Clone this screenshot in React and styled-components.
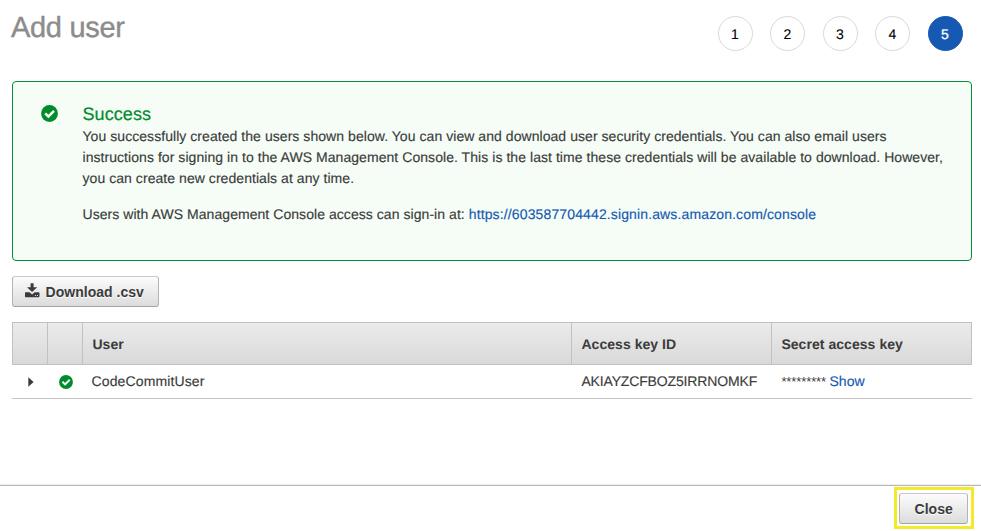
import React from "react";
import styled, { createGlobalStyle } from "styled-components";

const GlobalStyle = createGlobalStyle`
  * { box-sizing: border-box; }
  body {
    margin: 0;
    background: #fff;
    color: #3b3b3b;
    font-family: "Liberation Sans", Arial, sans-serif;
    font-size: 14px;
    line-height: 21px;
    text-rendering: geometricPrecision;
    overflow: hidden;
  }
`;

const Page = styled.div`
  display: flex;
  flex-direction: column;
  width: 981px;
  height: 531px;
  overflow: hidden;
`;

const Content = styled.main`
  flex: 1;
  display: flex;
  flex-direction: column;
  align-items: flex-start;
  padding: 0 9px 0 12px;
`;

const Header = styled.header`
  display: flex;
  justify-content: space-between;
  align-self: stretch;
  height: 81px;
  padding-right: 9.1px;
`;

const Title = styled.h1`
  margin: 10px 0 0 -1px;
  font-size: 29px;
  line-height: 36px;
  font-weight: 400;
  letter-spacing: -0.3px;
  color: #8c8c8c;
  -webkit-text-stroke: 0.4px #8c8c8c;
`;

const Steps = styled.ol`
  display: flex;
  gap: 17.5px;
  margin: 16px 0 0;
  padding: 0;
  list-style: none;
`;

const Step = styled.li`
  display: flex;
  align-items: center;
  justify-content: center;
  width: 35px;
  height: 35px;
  padding: 1px 1px 0 0;
  border-radius: 50%;
  border: 1px solid ${(p) => (p.$active ? "#1659b3" : "#d9d9d9")};
  background: ${(p) => (p.$active ? "#1659b3" : "#fff")};
  color: ${(p) => (p.$active ? "#fff" : "#000")};
  -webkit-text-stroke: ${(p) => (p.$active ? "0.3px" : "0.1px")} currentColor;
`;

const Alert = styled.section`
  display: flex;
  align-self: stretch;
  height: 180px;
  padding: 21px 20px 0 27px;
  border: 1px solid #048f3a;
  border-radius: 4px;
  background: #f5fdf6;
`;

const AlertIcon = styled.div`
  width: 42.5px;
  padding: 2px 0 0 0.5px;
`;

const AlertTitle = styled.h2`
  margin: 0;
  font-size: 18px;
  line-height: 23px;
  font-weight: 400;
  letter-spacing: 0.08px;
  color: #008c2c;
  -webkit-text-stroke: 0.2px #008c2c;
`;

const Paragraph = styled.p`
  margin: 0 0 15px;
  letter-spacing: 0.055px;
  -webkit-text-stroke: 0.15px currentColor;
  white-space: nowrap;
`;

const Link = styled.a`
  color: #1659b3;
  text-decoration: none;
`;

const ConsoleLink = styled(Link)`
  letter-spacing: 0.13px;
`;

const Button = styled.button`
  display: flex;
  align-items: center;
  gap: 5.5px;
  height: 31px;
  padding: ${(p) => p.$pad};
  border: 1px solid #b3b3b3;
  border-top-color: #c9c9c9;
  border-bottom-color: #a3a3a3;
  border-radius: 3px;
  background: linear-gradient(#fcfcfc, #dcdcdc);
  color: #3b3b3b;
  font: bold 14px/21px "Liberation Sans", Arial, sans-serif;
  letter-spacing: 0.03px;
  text-shadow: 0 1px 0 #fff;
`;

const Toolbar = styled.div`
  display: flex;
  padding: 15px 0;
`;

const Table = styled.div`
  width: 960px;
`;

const Row = styled.div`
  display: grid;
  grid-template-columns: 36px 35px 489px 200px 200px;
  height: 34px;
  border-bottom: 1px solid #c4c4c4;
`;

const HeadRow = styled(Row)`
  height: 43px;
  border: 1px solid #c1c1c1;
  grid-template-columns: 35px 35px 489px 200px 1fr;
  background: linear-gradient(#ebebeb, #d9d9d9);
`;

const HeadCell = styled.div`
  display: flex;
  align-items: center;
  padding: 2px 0 0 9.4px;
  border-right: 1px solid #c1c1c1;
  font-weight: 700;
  letter-spacing: 0.05px;
  &:last-child { border-right: 0; }
`;

const Cell = styled.div`
  display: flex;
  align-items: center;
  gap: 3.5px;
  padding-left: ${(p) => p.$inset};
  letter-spacing: ${(p) => p.$tracking || "0"};
  -webkit-text-stroke: 0.15px currentColor;
`;

const Secret = styled.span`
  font-size: 13px;
  letter-spacing: -0.1px;
  -webkit-text-stroke: 0;
`;

const Footer = styled.footer`
  display: flex;
  justify-content: flex-end;
  height: 46px;
  padding: 1px 7px 0 0;
  border-top: 1px solid #b8b8b8;
  box-shadow: 0 -1px 0 #ededed;
`;

const Highlight = styled.div`
  width: 80px;
  height: 42px;
  padding: 3px 2px 2px;
  border: 3px solid #f4e92a;
`;

const Icon = styled.svg`
  display: block;
  flex: none;
`;

const ButtonLabel = styled.span`
  padding-top: 1px;
`;

const CheckCircle = ({ size, ground }) => (
  <Icon width={size} height={size} viewBox="0 0 17 17">
    <circle cx="8.5" cy="8.5" r="8.4" fill="#008c2c" />
    <path d="M4.2 8.3 7.4 11.4 13 5.8" fill="none" stroke={ground} strokeWidth="2.5" />
  </Icon>
);

const DownloadIcon = () => (
  <Icon width="15" height="17" viewBox="0 0 15 17">
    <path d="M5.6 0.3h3v4h3.6L7.1 9 2 4.3h3.6z" fill="#3b3b3b" />
    <path
      fillRule="evenodd"
      d="M0.4 9.3h4.1l2.6 2.1 2.6-2.1h4.1l.7.7v3.5l-.7.7H.4l-.5-.7V10zM9.9 12v1h1v-1zM12 12v1h1v-1z"
      fill="#3b3b3b"
    />
  </Icon>
);

const Caret = () => (
  <Icon width="6" height="10" viewBox="0 0 6 10">
    <path d="M0.3 0.3 5.6 5 0.3 9.7z" fill="#3b3b3b" />
  </Icon>
);

export default function App() {
  return (
    <Page>
      <GlobalStyle />
      <Content>
        <Header>
          <Title>Add user</Title>
          <Steps>
            {[1, 2, 3, 4, 5].map((n) => (
              <Step key={n} $active={n === 5}>{n}</Step>
            ))}
          </Steps>
        </Header>
        <Alert>
          <AlertIcon><CheckCircle size={17} ground="#f5fdf6" /></AlertIcon>
          <div>
            <AlertTitle>Success</AlertTitle>
            <Paragraph>
              You successfully created the users shown below. You can view and download user security credentials. You can also email users<br />
              instructions for signing in to the AWS Management Console. This is the last time these credentials will be available to download. However,<br />
              you can create new credentials at any time.
            </Paragraph>
            <Paragraph>
              Users with AWS Management Console access can sign-in at:{" "}
              <ConsoleLink>https://603587704442.signin.aws.amazon.com/console</ConsoleLink>
            </Paragraph>
          </div>
        </Alert>
        <Toolbar>
          <Button $pad="0 14px 0 12px"><DownloadIcon /><ButtonLabel>Download .csv</ButtonLabel></Button>
        </Toolbar>
        <Table>
          <HeadRow>
            <HeadCell />
            <HeadCell />
            <HeadCell>User</HeadCell>
            <HeadCell>Access key ID</HeadCell>
            <HeadCell>Secret access key</HeadCell>
          </HeadRow>
          <Row>
            <Cell $inset="16px"><Caret /></Cell>
            <Cell $inset="11px"><CheckCircle size={14} ground="#fff" /></Cell>
            <Cell $inset="8.5px" $tracking="0.13px">CodeCommitUser</Cell>
            <Cell $inset="9.4px" $tracking="-0.15px">AKIAYZCFBOZ5IRRNOMKF</Cell>
            <Cell $inset="9.4px"><Secret>*********</Secret><Link>Show</Link></Cell>
          </Row>
        </Table>
      </Content>
      <Footer>
        <Highlight><Button $pad="0 14.5px"><ButtonLabel>Close</ButtonLabel></Button></Highlight>
      </Footer>
    </Page>
  );
}
